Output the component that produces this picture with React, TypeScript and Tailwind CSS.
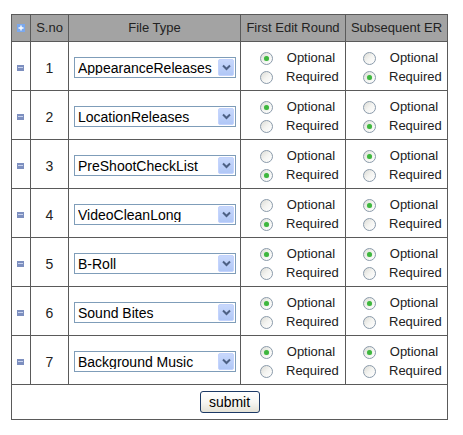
import React, { useState } from 'react';

type Choice = 'opt' | 'req';

interface Row {
    id: number;
    fileType: string;
    first: Choice;
    subsequent: Choice;
}

const initialRows: Row[] = [
    { id: 1, fileType: 'AppearanceReleases', first: 'opt', subsequent: 'req' },
    { id: 2, fileType: 'LocationReleases', first: 'opt', subsequent: 'req' },
    { id: 3, fileType: 'PreShootCheckList', first: 'req', subsequent: 'opt' },
    { id: 4, fileType: 'VideoCleanLong', first: 'req', subsequent: 'opt' },
    { id: 5, fileType: 'B-Roll', first: 'opt', subsequent: 'opt' },
    { id: 6, fileType: 'Sound Bites', first: 'opt', subsequent: 'opt' },
    { id: 7, fileType: 'Background Music', first: 'opt', subsequent: 'opt' },
];

const Radio: React.FC<{ checked: boolean; onClick: () => void }> = ({ checked, onClick }) => (
    <span
        onClick={onClick}
        className="relative inline-block h-[13px] w-[13px] shrink-0 cursor-pointer rounded-full border border-[#8b9bab] bg-gradient-to-br from-[#dcdcd6] via-[#f4f4f1] to-white"
    >
        {checked && (
            <span className="absolute left-[3px] top-[3px] h-[5px] w-[5px] rounded-full bg-[#3fb63f] shadow-[0_0_1px_#9be39b]" />
        )}
    </span>
);

const RadioPair: React.FC<{ value: Choice; onChange: (v: Choice) => void; pad: string }> = ({ value, onChange, pad }) => (
    <div className={`flex flex-col pt-[3px] ${pad}`}>
        <div className="flex h-[19px] items-center">
            <Radio checked={value === 'opt'} onClick={() => onChange('opt')} />
            <span className="ml-[13px] w-[50px] text-center">Optional</span>
        </div>
        <div className="flex h-[19px] items-center">
            <Radio checked={value === 'req'} onClick={() => onChange('req')} />
            <span className="ml-[13px] w-[50px] text-center">Required</span>
        </div>
    </div>
);

const FakeSelect: React.FC<{ value: string }> = ({ value }) => (
    <div className="flex h-[21px] w-[162px] items-center border border-[#7f9db9] bg-white pl-[3px] pr-[1px]">
        <span className="flex-1 truncate text-[14px] leading-none text-black">{value}</span>
        <span className="flex h-[17px] w-[16px] items-center justify-center rounded-[2px] border border-[#c3d3fd] bg-gradient-to-b from-[#c8d8fc] to-[#b0c7f6]">
            <svg width="9" height="7" viewBox="0 0 9 7">
                <path d="M1 1.5 L4.5 5 L8 1.5" fill="none" stroke="#4d6185" strokeWidth="2" />
            </svg>
        </span>
    </div>
);

export default function App() {
    const [rows, setRows] = useState<Row[]>(initialRows);

    const update = (id: number, key: 'first' | 'subsequent', v: Choice) => {
        setRows(prev => prev.map(r => (r.id === id ? { ...r, [key]: v } : r)));
    };

    return (
        <div className="h-[435px] w-[463px] bg-white pl-[11px] pt-[14px] font-['Liberation_Sans',Arial,sans-serif] text-[13px] text-[#222]">
            <table className="w-[437px] table-fixed border-collapse">
                <colgroup>
                    <col className="w-[19px]" />
                    <col className="w-[38px]" />
                    <col className="w-[172px]" />
                    <col className="w-[105px]" />
                    <col className="w-[102px]" />
                </colgroup>
                <thead>
                    <tr className="h-[27px] bg-[#a3a3a3]">
                        <th className="border border-[#5a5a5a] p-0 align-middle">
                            <span className="mx-auto flex h-[8px] w-[8px] items-center justify-center bg-[#7aa8ee]">
                                <svg width="6" height="6" viewBox="0 0 6 6">
                                    <path d="M3 0.5 V5.5 M0.5 3 H5.5" stroke="#fff" strokeWidth="1.4" />
                                </svg>
                            </span>
                        </th>
                        <th className="border border-[#5a5a5a] p-0 font-normal">S.no</th>
                        <th className="border border-[#5a5a5a] p-0 font-normal">File Type</th>
                        <th className="border border-[#5a5a5a] p-0 font-normal">First Edit Round</th>
                        <th className="border border-[#5a5a5a] p-0 font-normal">Subsequent ER</th>
                    </tr>
                </thead>
                <tbody>
                    {rows.map(r => (
                        <tr key={r.id} className="h-[49px]">
                            <td className="border border-[#5a5a5a] p-0 align-middle">
                                <span className="ml-[5px] mt-[3px] flex h-[6px] w-[7px] items-center justify-center bg-[#7d8fbf]">
                                    <span className="h-[1px] w-[5px] bg-[#c9d3ee]" />
                                </span>
                            </td>
                            <td className="border border-[#5a5a5a] p-0 text-center align-middle text-[14px]">
                                <span className="relative top-[2px]">{r.id}</span>
                            </td>
                            <td className="border border-[#5a5a5a] p-0 align-middle">
                                <div className="ml-[5px] mt-[3px]">
                                    <FakeSelect value={r.fileType} />
                                </div>
                            </td>
                            <td className="border border-[#5a5a5a] p-0 align-middle">
                                <RadioPair value={r.first} onChange={v => update(r.id, 'first', v)} pad="pl-[19px]" />
                            </td>
                            <td className="border border-[#5a5a5a] p-0 align-middle">
                                <RadioPair value={r.subsequent} onChange={v => update(r.id, 'subsequent', v)} pad="pl-[17px]" />
                            </td>
                        </tr>
                    ))}
                    <tr className="h-[35px]">
                        <td colSpan={5} className="border border-[#5a5a5a] p-0 text-center align-middle">
                            <button
                                type="button"
                                className="h-[22px] w-[60px] rounded-[3px] border border-[#1c3a66] bg-gradient-to-b from-white via-[#f7f7f3] to-[#e4e2d6] text-[14px] leading-none text-black"
                            >
                                submit
                            </button>
                        </td>
                    </tr>
                </tbody>
            </table>
        </div>
    );
}
